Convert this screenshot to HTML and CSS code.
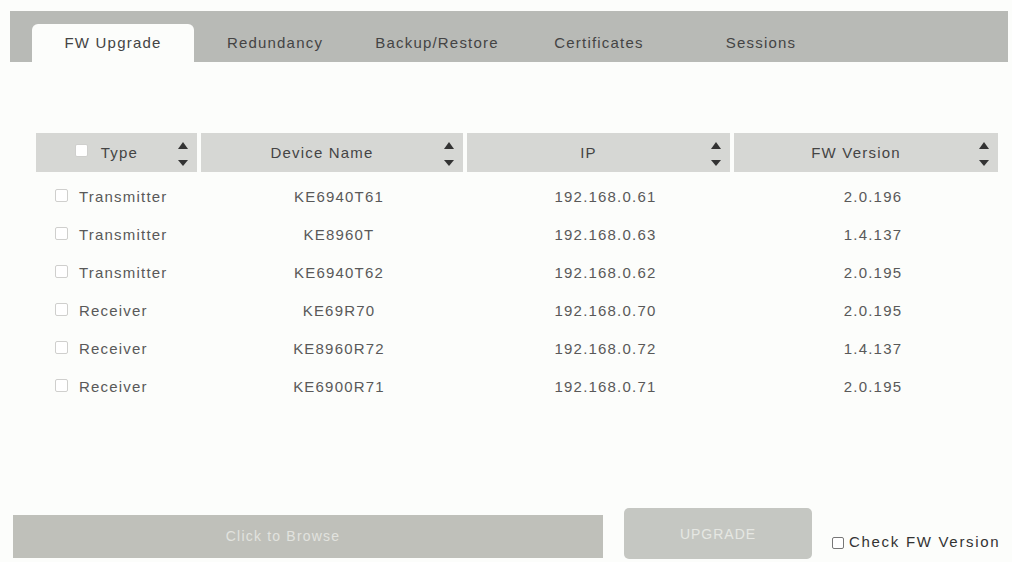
FILE: index.html
```html
<!DOCTYPE html>
<html lang="en">
<head>
  <meta charset="UTF-8" />
  <title>FW Upgrade</title>
  <link rel="stylesheet" href="styles.css">
</head>
<body>
  <nav class="tabs">
    <div class="tab active">FW Upgrade</div>
    <div class="tab">Redundancy</div>
    <div class="tab">Backup/Restore</div>
    <div class="tab">Certificates</div>
    <div class="tab">Sessions</div>
  </nav>

  <main>
    <div class="grid head">
      <div class="th type"><span class="box"></span>Type<span class="sort"></span></div>
      <div class="th">Device Name<span class="sort"></span></div>
      <div class="th">IP<span class="sort"></span></div>
      <div class="th">FW Version<span class="sort"></span></div>
    </div>

    <div class="rows">
      <div class="grid row">
        <div class="td type"><span class="box"></span>Transmitter</div>
        <div class="td">KE6940T61</div>
        <div class="td">192.168.0.61</div>
        <div class="td">2.0.196</div>
      </div>
      <div class="grid row">
        <div class="td type"><span class="box"></span>Transmitter</div>
        <div class="td">KE8960T</div>
        <div class="td">192.168.0.63</div>
        <div class="td">1.4.137</div>
      </div>
      <div class="grid row">
        <div class="td type"><span class="box"></span>Transmitter</div>
        <div class="td">KE6940T62</div>
        <div class="td">192.168.0.62</div>
        <div class="td">2.0.195</div>
      </div>
      <div class="grid row">
        <div class="td type"><span class="box"></span>Receiver</div>
        <div class="td">KE69R70</div>
        <div class="td">192.168.0.70</div>
        <div class="td">2.0.195</div>
      </div>
      <div class="grid row">
        <div class="td type"><span class="box"></span>Receiver</div>
        <div class="td">KE8960R72</div>
        <div class="td">192.168.0.72</div>
        <div class="td">1.4.137</div>
      </div>
      <div class="grid row">
        <div class="td type"><span class="box"></span>Receiver</div>
        <div class="td">KE6900R71</div>
        <div class="td">192.168.0.71</div>
        <div class="td">2.0.195</div>
      </div>
    </div>
  </main>

  <footer>
    <div class="browse">Click to Browse</div>
    <button class="upgrade" disabled>UPGRADE</button>
    <label class="check"><span class="box dark"></span>Check FW Version</label>
  </footer>
</body>
</html>
```

FILE: styles.css
```css
body {
  margin: 0;
  background: #fcfdfb;
  font-family: "Liberation Sans", Arial, sans-serif;
  font-size: 15px;
  letter-spacing: 1.2px;
  color: #595959;
}
.tabs {
  display: flex;
  align-items: flex-end;
  margin: 11px 4px 0 10px;
  height: 51px;
  padding-left: 22px;
  background-color: #b8bab6;
}
.tab {
  width: 162px;
  height: 38px;
  padding-top: 10px;
  box-sizing: border-box;
  text-align: center;
  color: #444;
}
.tab.active {
  background-color: #fcfdfb;
  border-radius: 6px 6px 0 0;
}
main {
  margin: 71px 14px 0 36px;
}
.grid {
  display: grid;
  grid-template-columns: 161px 262px 263px 264px;
  column-gap: 4px;
}
.th {
  position: relative;
  height: 39px;
  display: flex;
  align-items: center;
  justify-content: center;
  padding-right: 20px;
  background-color: #d6d7d4;
  color: #444;
}
.sort {
  position: absolute;
  right: 9px;
  top: 9px;
  width: 10px;
  height: 24px;
}
.sort::before, .sort::after {
  content: "";
  position: absolute;
  left: 0;
  border-left: 5px solid transparent;
  border-right: 5px solid transparent;
}
.sort::before {
  top: 0;
  border-bottom: 7px solid #333;
}
.sort::after {
  bottom: 0;
  border-top: 6px solid #333;
}
.box {
  display: inline-block;
  width: 11px;
  height: 11px;
  border: 1px solid #cfcfcd;
  border-radius: 2px;
  background: #fff;
  margin-right: 11px;
}
.th .box {
  margin-right: 13px;
  margin-top: -4px;
}
.rows {
  margin-top: 5px;
}
.row {
  height: 38px;
}
.td {
  display: flex;
  align-items: center;
  justify-content: center;
  padding-left: 14px;
}
.td.type {
  justify-content: flex-start;
  padding-left: 19px;
}
.td.type .box {
  margin-top: -2px;
}
footer {
  display: flex;
  margin: 103px 0 0 13px;
  height: 51px;
}
.browse {
  align-self: flex-end;
  width: 540px;
  height: 43px;
  margin-bottom: 1px;
  padding-right: 50px;
  line-height: 43px;
  text-align: center;
  background-color: #bfc0ba;
  color: #e2e3df;
  font-size: 14px;
}
.upgrade {
  width: 188px;
  height: 51px;
  margin-left: 21px;
  border: none;
  border-radius: 5px;
  background-color: #c5c7c2;
  color: #e6e7e3;
  font-family: inherit;
  font-size: 14px;
  letter-spacing: 1px;
}
.check {
  align-self: flex-end;
  display: flex;
  align-items: center;
  margin: 0 0 9px 20px;
  color: #333;
  letter-spacing: 1.7px;
}
.box.dark {
  width: 10px;
  height: 10px;
  border-color: #777;
  margin: 2px 5px 0 0;
}
```
